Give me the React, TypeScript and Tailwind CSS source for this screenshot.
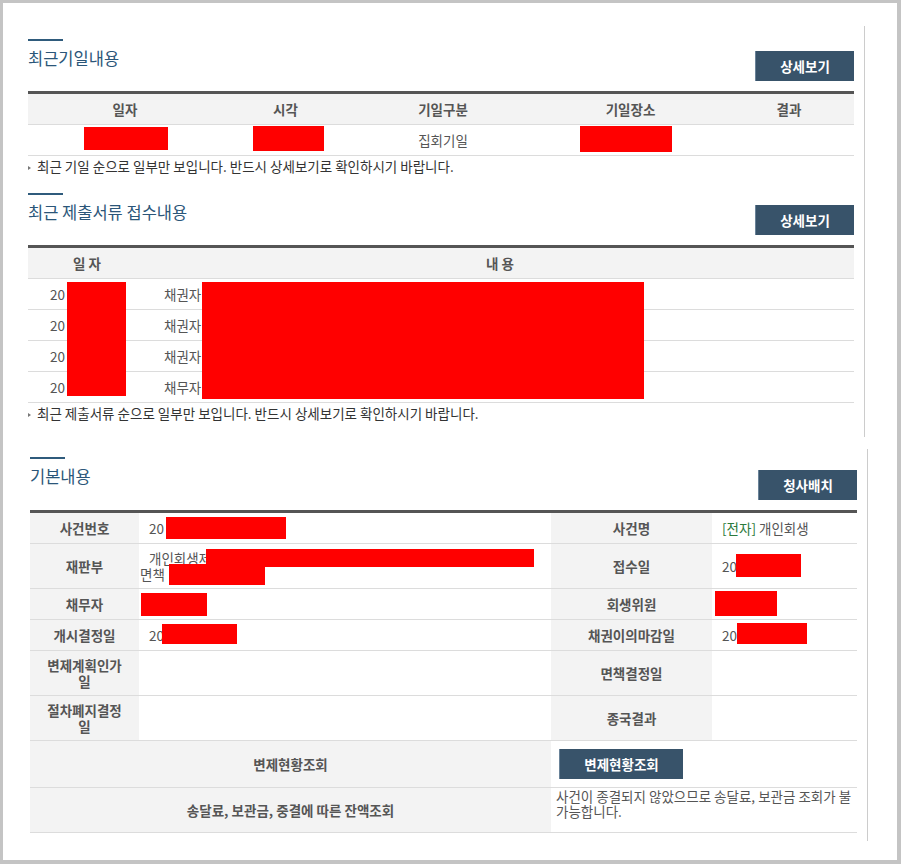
const Red = ({ l, t, w, h }: { l: number; t: number; w: number; h: number }) => (
  <span
    className="absolute bg-[#ff0000]"
    style={{ left: l, top: t, width: w, height: h }}
  />
);

const SectionHead = ({ title, btn, btnTop }: { title: string; btn: string; btnTop: string }) => (
  <div className="flex justify-between">
    <div>
      <div className="h-[2px] w-[35px] bg-[#2f5b7c]" />
      <h3 className="mt-[7px] text-[16.5px] leading-[20px] text-[#2b5679]">{title}</h3>
    </div>
    <button
      className={
        "h-[30px] w-[99px] bg-[#38536a] border-l border-[#6a8399] text-white" +
        " text-[13.5px] font-bold " +
        btnTop
      }
    >
      {btn}
    </button>
  </div>
);

const Note = ({ text }: { text: string }) => (
  <p className="flex h-[21px] items-center text-[13.5px] text-[#333]">
    <span className="mr-[6px] mt-[3px] h-0 w-0 border-y-[2.5px] border-l-[3px] border-y-transparent border-l-[#777]" />
    {text}
  </p>
);

const Label = ({ w, children }: { w: string; children: React.ReactNode }) => (
  <div
    className={
      "flex items-center justify-center bg-[#f3f3f3] text-center font-bold" +
      " text-[#555] leading-[16px] " +
      w
    }
  >
    {children}
  </div>
);

const Value = ({ w, children }: { w: string; children?: React.ReactNode }) => (
  <div className={"relative flex items-center pl-[10px] text-[#555] " + w}>{children}</div>
);

export default function App() {
  return (
    <div className="h-[864px] w-[901px] bg-[#c4c4c4] pb-[4px] pl-[3px] pr-[4px] pt-[3px] font-['Noto_Sans_CJK_KR',sans-serif]">
      <div className="h-full overflow-hidden bg-white">
        {/* 상단: 기일 / 제출서류 */}
        <div className="mt-[23px] w-[862px] border-r border-[#cccccc] pb-[13px] pl-[25px] pr-[10px] pt-[13px]">
          <SectionHead title="최근기일내용" btn="상세보기" btnTop="mt-[12px]" />
          <div className="mt-[10px] border-t-[3px] border-[#555] text-[13.5px]">
            <div className="flex h-[31px] items-center border-b border-[#dcdcdc] bg-[#f3f3f3] font-bold text-[#555]">
              <div className="w-[194px] text-center">일자</div>
              <div className="w-[127px] text-center">시각</div>
              <div className="w-[188px] text-center">기일구분</div>
              <div className="w-[187px] text-center">기일장소</div>
              <div className="w-[130px] text-center">결과</div>
            </div>
            <div className="flex h-[31px] border-b border-[#dcdcdc] text-[#555]">
              <div className="relative w-[194px]">
                <Red l={56} t={2} w={84} h={23} />
              </div>
              <div className="relative w-[127px]">
                <Red l={31} t={1} w={71} h={25} />
              </div>
              <div className="flex w-[188px] items-center justify-center">집회기일</div>
              <div className="relative w-[187px]">
                <Red l={43} t={1} w={92} h={26} />
              </div>
              <div className="w-[130px]" />
            </div>
          </div>
          <Note text="최근 기일 순으로 일부만 보입니다. 반드시 상세보기로 확인하시기 바랍니다." />

          <div className="mt-[16px]">
            <SectionHead title="최근 제출서류 접수내용" btn="상세보기" btnTop="mt-[12px]" />
            <div className="mt-[10px] border-t-[3px] border-[#555] text-[13.5px]">
              <div className="flex h-[31px] items-center border-b border-[#dcdcdc] bg-[#f3f3f3] font-bold text-[#555]">
                <div className="w-[118px] text-center">일 자</div>
                <div className="w-[708px] text-center">내 용</div>
              </div>
              <div className="relative text-[#555]">
                {["채권자", "채권자", "채권자", "채무자"].map((who, i) => (
                  <div key={i} className="flex h-[31px] items-center border-b border-[#dcdcdc]">
                    <div className="w-[118px] pl-[22px]">20</div>
                    <div className="w-[708px] pl-[18px]">{who}</div>
                  </div>
                ))}
                <Red l={39} t={3} w={59} h={114} />
                <Red l={174} t={3} w={442} h={117} />
              </div>
            </div>
            <Note text="최근 제출서류 순으로 일부만 보입니다. 반드시 상세보기로 확인하시기 바랍니다." />
          </div>
        </div>

        {/* 하단: 기본내용 */}
        <div className="mt-[12px] w-[865px] border-r border-[#cccccc] pb-[8px] pl-[27px] pr-[10px] pt-[8px]">
          <SectionHead title="기본내용" btn="청사배치" btnTop="mt-[13px]" />
          <div className="mt-[10px] border-t-[3px] border-[#555] text-[13.5px]">
            <div className="flex h-[31px] border-b border-[#dcdcdc]">
              <Label w="w-[109px]">사건번호</Label>
              <Value w="w-[412px]">
                20
                <Red l={27} t={4} w={120} h={22} />
              </Value>
              <Label w="w-[161px]">사건명</Label>
              <Value w="w-[145px]">
                <span className="text-[#2b7a3b]">[전자]</span>&nbsp;개인회생
              </Value>
            </div>
            <div className="flex h-[45px] border-b border-[#dcdcdc]">
              <Label w="w-[109px]">재판부</Label>
              <div className="relative flex w-[412px] flex-col justify-center pl-[1px] leading-[16px] text-[#555]">
                <span className="pl-[9px]">개인회생제</span>
                <span>면책</span>
                <Red l={67} t={5} w={328} h={18} />
                <Red l={30} t={20} w={96} h={21} />
              </div>
              <Label w="w-[161px]">접수일</Label>
              <Value w="w-[145px]">
                20
                <Red l={24} t={10} w={65} h={23} />
              </Value>
            </div>
            <div className="flex h-[31px] border-b border-[#dcdcdc]">
              <Label w="w-[109px]">채무자</Label>
              <Value w="w-[412px]">
                <Red l={2} t={4} w={66} h={23} />
              </Value>
              <Label w="w-[161px]">회생위원</Label>
              <Value w="w-[145px]">
                <Red l={3} t={2} w={62} h={25} />
              </Value>
            </div>
            <div className="flex h-[31px] border-b border-[#dcdcdc]">
              <Label w="w-[109px]">개시결정일</Label>
              <Value w="w-[412px]">
                20
                <Red l={23} t={4} w={75} h={20} />
              </Value>
              <Label w="w-[161px]">채권이의마감일</Label>
              <Value w="w-[145px]">
                20
                <Red l={25} t={3} w={70} h={21} />
              </Value>
            </div>
            <div className="flex h-[45px] border-b border-[#dcdcdc]">
              <Label w="w-[109px]">
                변제계획인가
                <br />일
              </Label>
              <Value w="w-[412px]" />
              <Label w="w-[161px]">면책결정일</Label>
              <Value w="w-[145px]" />
            </div>
            <div className="flex h-[45px] border-b border-[#dcdcdc]">
              <Label w="w-[109px]">
                절차폐지결정
                <br />일
              </Label>
              <Value w="w-[412px]" />
              <Label w="w-[161px]">종국결과</Label>
              <Value w="w-[145px]" />
            </div>
            <div className="flex h-[47px] border-b border-[#dcdcdc]">
              <Label w="w-[521px]">변제현황조회</Label>
              <div className="flex w-[306px] items-center pl-[8px]">
                <button className="h-[30px] w-[124px] border-l border-[#6a8399] bg-[#38536a] text-[13.5px] font-bold text-white">
                  변제현황조회
                </button>
              </div>
            </div>
            <div className="flex h-[45px] border-b border-[#dcdcdc]">
              <Label w="w-[521px]">송달료, 보관금, 중결에 따른 잔액조회</Label>
              <div className="w-[306px] whitespace-nowrap pl-[5px] pt-[1px] leading-[15px] text-[#555]">
                사건이 종결되지 않았으므로 송달료, 보관금 조회가 불
                <br />
                가능합니다.
              </div>
            </div>
          </div>
        </div>
      </div>
    </div>
  );
}
